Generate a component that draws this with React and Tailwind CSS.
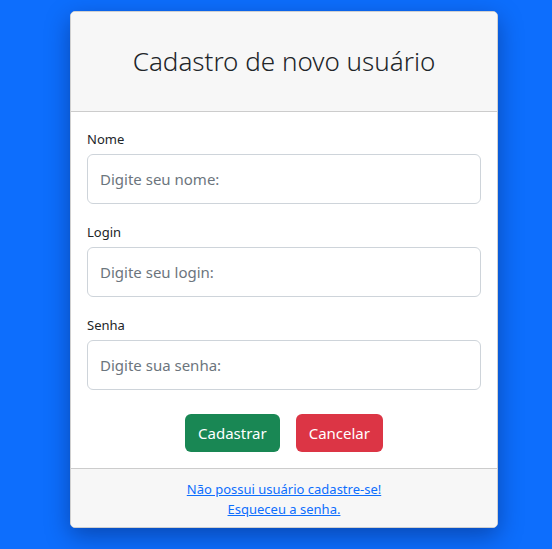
export default function App() {
  const font = { fontFamily: '"Segoe UI", "Noto Sans", "Open Sans", sans-serif' };
  return (
    <div className="min-h-[549px] w-full bg-[#0d6efd] flex justify-start pl-[70px] pt-[11px]" style={font}>
      <div className="w-[428px] h-[517px] flex flex-col bg-white border border-[#d0d0d0] rounded-[5px] overflow-hidden shadow-[0_8px_24px_rgba(0,0,40,0.35)]">
        <div className="h-[100px] bg-[#f7f7f7] border-b border-[#cccccc] flex items-center justify-center">
          <h1 className="text-[26px] font-light text-[#212529] leading-none pb-[2px]">Cadastro de novo usuário</h1>
        </div>
        <div className="flex-1 px-4 pt-[19px] flex flex-col">
          {[
            ["Nome", "Digite seu nome:"],
            ["Login", "Digite seu login:"],
            ["Senha", "Digite sua senha:"],
          ].map(([label, ph], i) => (
            <div key={label} className={"flex flex-col " + (i < 2 ? "mb-[20px]" : "")}>
              <label className="text-[13px] text-[#212529] leading-[16px] mb-[7px]">{label}</label>
              <input
                type="text"
                placeholder={ph}
                className="h-[50px] w-full border border-[#ced4da] rounded-[6px] px-3 text-[15px] text-[#212529] placeholder:text-[#6c757d] outline-none"
              />
            </div>
          ))}
          <div className="flex justify-center gap-4 mt-[24px]">
            <button className="h-[38px] px-[13px] bg-[#198754] text-white text-[15px] rounded-[6px]">Cadastrar</button>
            <button className="h-[38px] px-[13px] bg-[#dc3545] text-white text-[15px] rounded-[6px]">Cancelar</button>
          </div>
        </div>
        <div className="h-[59px] bg-[#f7f7f7] border-t border-[#cccccc] flex flex-col items-center pt-[12px] gap-[3px]">
          <a href="#" className="text-[13px] leading-[17px] text-[#0d6efd] underline">Não possui usuário cadastre-se!</a>
          <a href="#" className="text-[13px] leading-[17px] text-[#0d6efd] underline">Esqueceu a senha.</a>
        </div>
      </div>
    </div>
  );
}
